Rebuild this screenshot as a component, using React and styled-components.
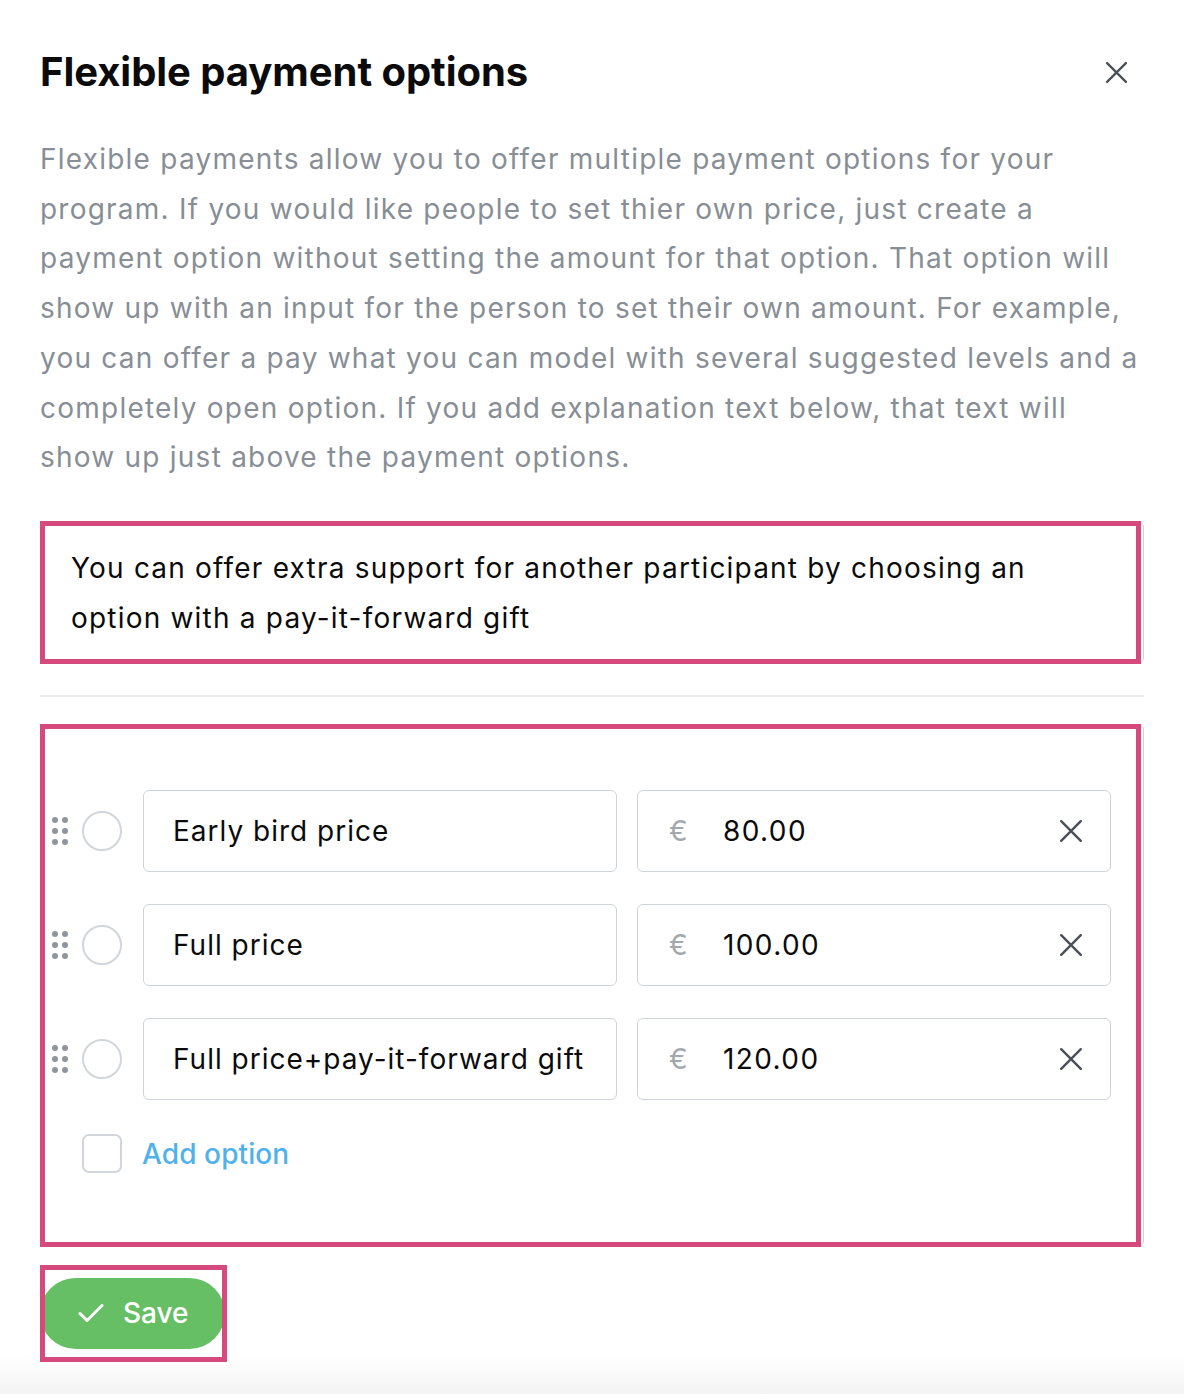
import React from 'react'
import styled, { createGlobalStyle } from 'styled-components'

const GlobalStyle = createGlobalStyle`
  html, body {
    margin: 0;
    padding: 0;
    background: #ffffff;
  }
  body {
    font-family: Inter, "Noto Sans", sans-serif;
    -webkit-font-smoothing: antialiased;
  }
`

const Page = styled.div`
  min-height: 1394px;
  box-sizing: border-box;
  padding: 46px 40px 40px;
  background: linear-gradient(to bottom, #ffffff calc(100% - 46px), #f1f1f2 100%);
`

const Header = styled.div`
  display: flex;
  justify-content: space-between;
  align-items: center;
`

const Title = styled.h1`
  margin: 0;
  font-size: 40px;
  line-height: 52px;
  font-weight: 700;
  letter-spacing: -0.05px;
  color: #0b0b0c;
`

const CloseButton = styled.button`
  border: none;
  background: none;
  padding: 0;
  margin-right: 16px;
  display: flex;
  cursor: pointer;
`

const Description = styled.p`
  margin: 37px 0 0;
  font-size: 28px;
  line-height: 49.7px;
  color: #878e96;
  letter-spacing: 1.23px;
`

const Line = styled.span`
  display: block;
  white-space: nowrap;
`

const Highlight = styled.div`
  position: relative;
  display: flow-root;
  margin-top: ${p => p.$top || 0}px;
`

const Marker = styled.div`
  position: absolute;
  box-sizing: border-box;
  top: 0;
  bottom: 0;
  left: 0;
  ${p => (p.$width ? `width: ${p.$width}px;` : 'right: 3px;')}
  border: 5px solid #d6497c;
  pointer-events: none;
`

const TextBox = styled.div`
  border: 1px solid #d1d5db;
  border-radius: 6px;
  padding: 21px 30px 20px;
  font-size: 28px;
  line-height: 50px;
  color: #0b0b0c;
  letter-spacing: 1.2px;
`

const Divider = styled.hr`
  margin: 31px 0 0;
  border: none;
  border-top: 2px solid #eaebed;
`

const OptionsBox = styled.div`
  border: 1px solid #d1d5db;
  border-radius: 6px;
  padding: 65px 32px 73px 11px;
  display: flex;
  flex-direction: column;
  gap: 32px;
`

const Row = styled.div`
  display: flex;
  align-items: center;
`

const Handle = styled.div`
  display: grid;
  grid-template-columns: repeat(2, 6px);
  gap: 5px 4px;
  width: 16px;
  margin-right: 14px;
  span {
    width: 6px;
    height: 6px;
    border-radius: 50%;
    background: #8f959c;
  }
`

const Radio = styled.div`
  width: 36px;
  height: 36px;
  border-radius: 50%;
  border: 2px solid #d2d6db;
  margin-right: 21px;
  flex: none;
`

const Checkbox = styled.div`
  width: 36px;
  height: 35px;
  border-radius: 7px;
  border: 2px solid #d2d6db;
  margin: 2px 20px 0 30px;
  flex: none;
`

const Input = styled.div`
  flex: 1;
  min-width: 0;
  height: 80px;
  box-sizing: content-box;
  border: 1px solid #cfd4da;
  border-radius: 6px;
  display: flex;
  align-items: center;
  padding: 0 27px 0 29px;
  font-size: 28px;
  color: #0b0b0c;
  letter-spacing: 1px;
  white-space: nowrap;
  overflow: hidden;
  & + & {
    margin-left: 20px;
  }
`

const Currency = styled.span`
  color: #a2a8ae;
  width: 54px;
  margin-left: 2px;
  flex: none;
`

const Amount = styled.span`
  flex: 1;
  letter-spacing: 1.4px;
`

const AddLink = styled.a`
  font-size: 28px;
  font-weight: 500;
  color: #4fb2ea;
  letter-spacing: 0.1px;
  text-decoration: none;
  cursor: pointer;
  margin-top: 3px;
`

const SaveButton = styled.button`
  display: flex;
  align-items: center;
  gap: 19px;
  height: 71px;
  padding: 0 36px 0 38px;
  border: none;
  border-radius: 36px;
  background: #67bf65;
  color: #ffffff;
  font-family: Inter, "Noto Sans", sans-serif;
  font-size: 28px;
  font-weight: 500;
  cursor: pointer;
  margin: 13px 0;
`

const XIcon = ({ size = 22, color = '#4b5058', width = 2 }) => (
  <svg width={size} height={size} viewBox="0 0 22 22" fill="none">
    <path d="M2 2L20 20M20 2L2 20" stroke={color} strokeWidth={width} strokeLinecap="round" />
  </svg>
)

const descriptionLines = [
  'Flexible payments allow you to offer multiple payment options for your',
  'program. If you would like people to set thier own price, just create a',
  'payment option without setting the amount for that option. That option will',
  'show up with an input for the person to set their own amount. For example,',
  'you can offer a pay what you can model with several suggested levels and a',
  'completely open option. If you add explanation text below, that text will',
  'show up just above the payment options.',
]

const options = [
  { name: 'Early bird price', amount: '80.00' },
  { name: 'Full price', amount: '100.00' },
  { name: 'Full price+pay-it-forward gift', amount: '120.00' },
]

export default function App() {
  return (
    <>
      <GlobalStyle />
      <Page>
        <Header>
          <Title>Flexible payment options</Title>
          <CloseButton aria-label="Close">
            <XIcon size={23} width={2.2} />
          </CloseButton>
        </Header>

        <Description>
          {descriptionLines.map(l => (
            <Line key={l}>{l}</Line>
          ))}
        </Description>

        <Highlight $top={38}>
          <TextBox>
            You can offer extra support for another participant by choosing an
            <br />
            option with a pay-it-forward gift
          </TextBox>
          <Marker />
        </Highlight>

        <Divider />

        <Highlight $top={27}>
          <OptionsBox>
            {options.map(o => (
              <Row key={o.name}>
                <Handle>
                  <span /><span /><span /><span /><span /><span />
                </Handle>
                <Radio />
                <Input>{o.name}</Input>
                <Input>
                  <Currency>€</Currency>
                  <Amount>{o.amount}</Amount>
                  <XIcon size={24} width={2.2} />
                </Input>
              </Row>
            ))}
            <Row>
              <Checkbox />
              <AddLink>Add option</AddLink>
            </Row>
          </OptionsBox>
          <Marker />
        </Highlight>

        <Highlight $top={18}>
          <SaveButton>
            <svg width="26" height="20" viewBox="0 0 26 20" fill="none">
              <path d="M2 10.5L9 17.5L24 2.5" stroke="#fff" strokeWidth="3" strokeLinecap="round" strokeLinejoin="round" />
            </svg>
            Save
          </SaveButton>
          <Marker $width={187} />
        </Highlight>
      </Page>
    </>
  )
}
